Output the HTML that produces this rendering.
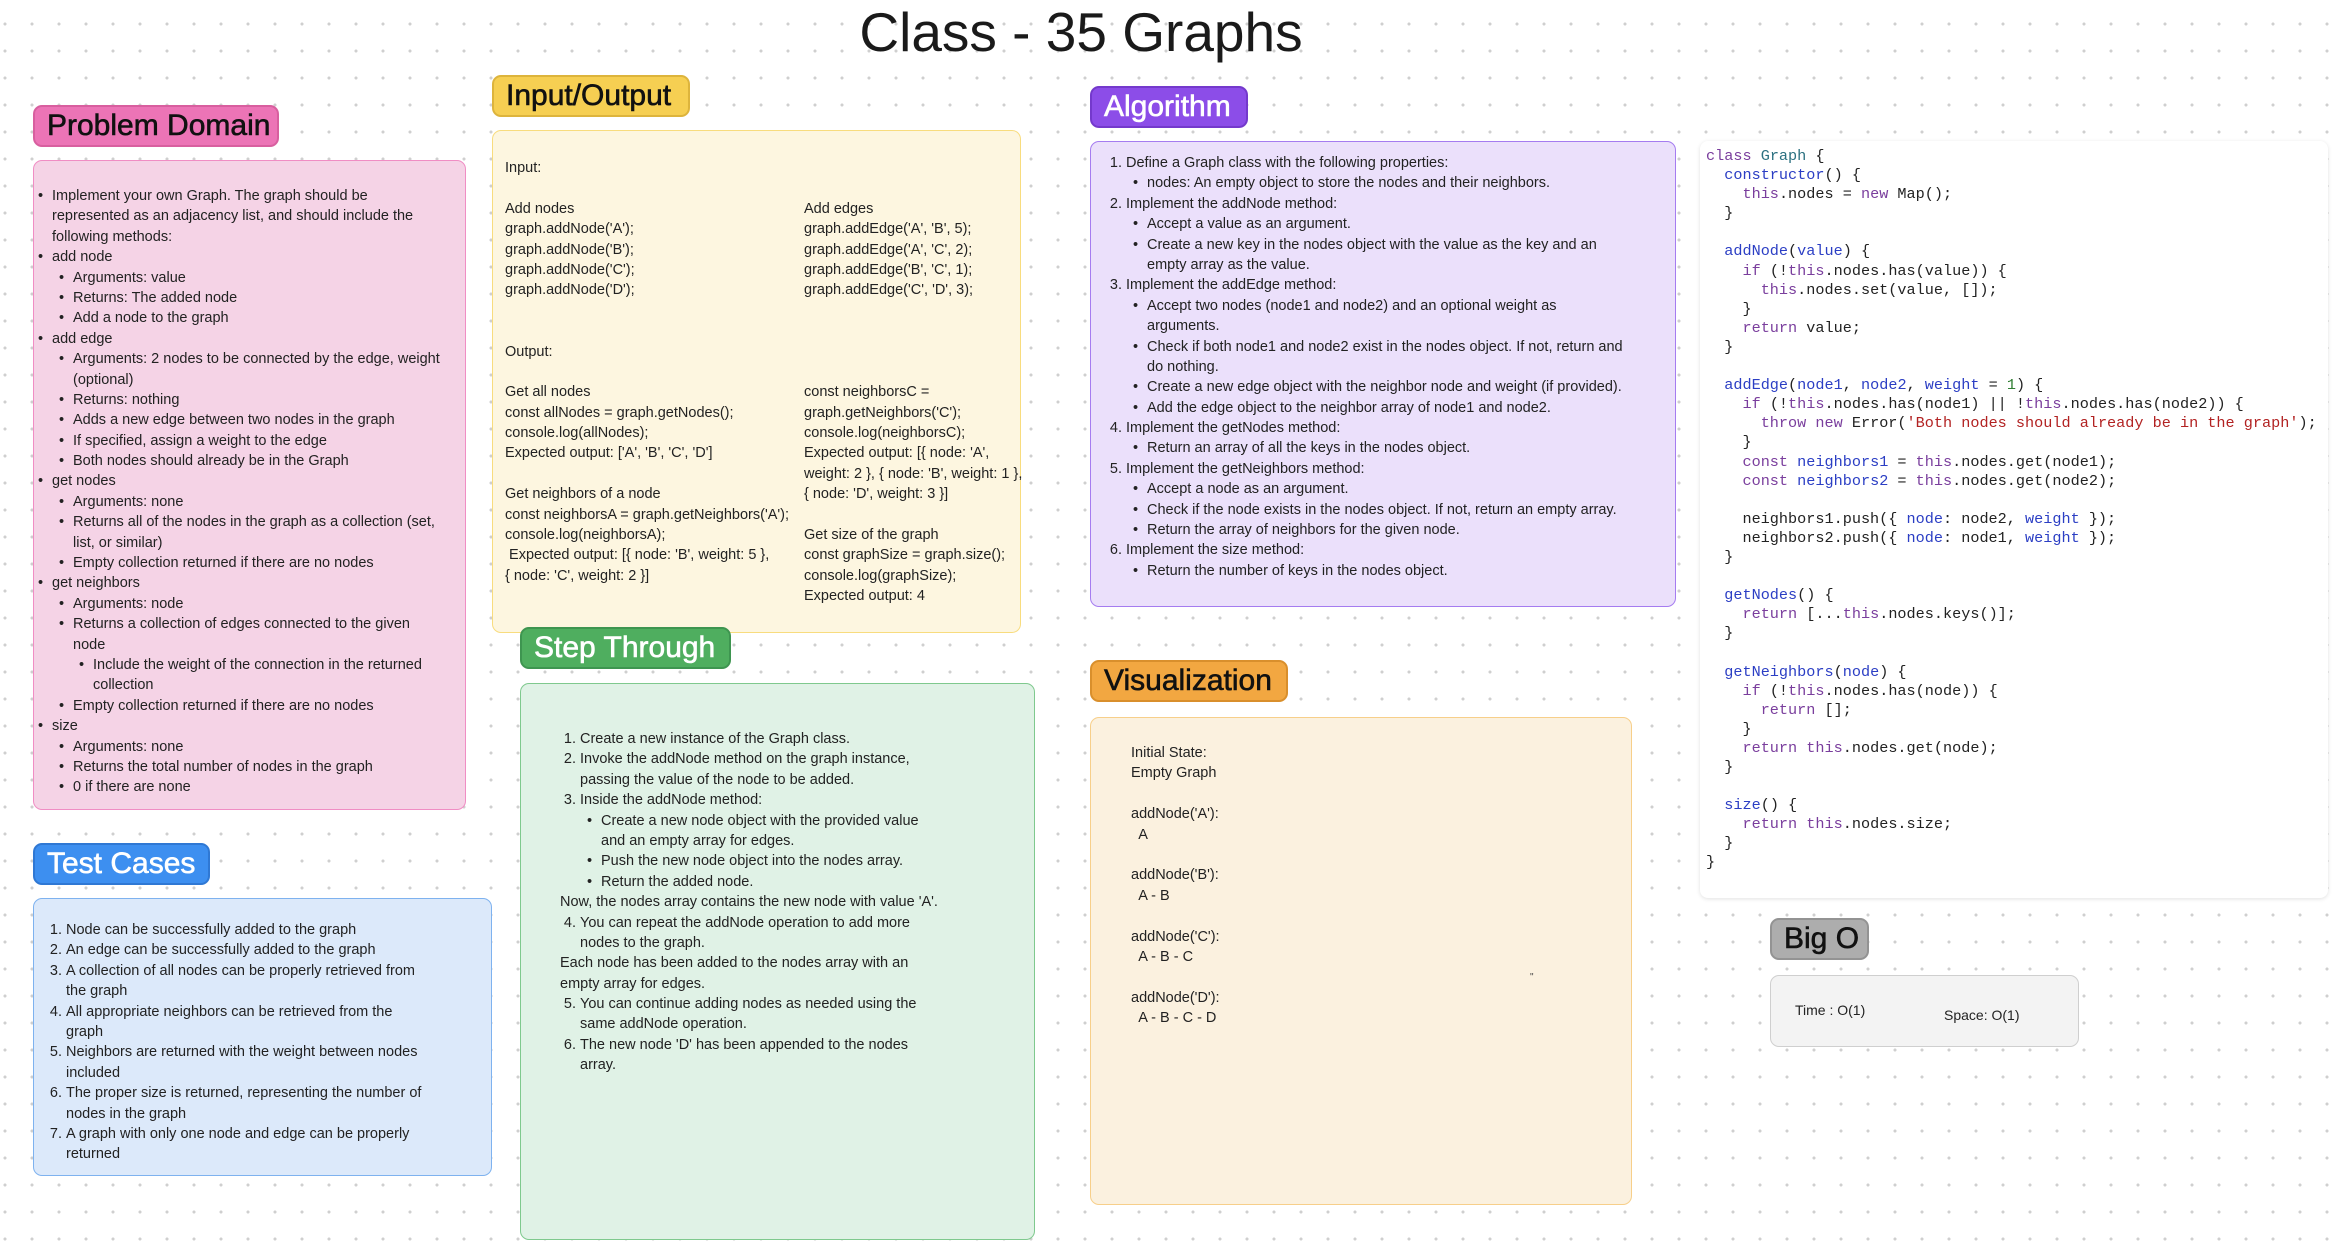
<!DOCTYPE html>
<html><head><meta charset="utf-8"><style>
*{margin:0;padding:0;box-sizing:border-box}
body{width:2346px;height:1250px;position:relative;overflow:hidden;background-color:#fff;
background-image:radial-gradient(circle,#cfcfcf 1.3px,transparent 1.8px);background-size:27px 27px;background-position:-8.5px 10.5px;
font-family:"Liberation Sans",sans-serif;color:#222}
.a{position:absolute}
.lbl{position:absolute;height:42px;border-radius:9px;border:2px solid;font-size:30px;line-height:38px;padding-left:12px;-webkit-text-stroke:0.6px currentColor;color:#111}
.box{position:absolute;border-radius:9px;border:1.5px solid}
.t{position:absolute;font-size:14.5px;line-height:20.4px}
.t div{position:relative;height:20.4px;white-space:pre}
.t .m{position:absolute;text-align:right}
.code{position:absolute;left:1706px;top:147px;font-family:"Liberation Mono",monospace;font-size:15.2px;line-height:19.1px;white-space:pre;color:#222}
.k{color:#7a3e9d}.f{color:#2b3ec4}.c{color:#2b7080}.s{color:#b22222}.n{color:#2e7d32}
</style></head><body>
<div class="a" style="left:781px;top:3px;width:600px;text-align:center;font-size:55px;line-height:58px;color:#1a1a1a">Class - 35 Graphs</div>

<!-- Problem Domain -->
<div class="lbl" style="left:33px;top:105px;width:246px;background:#ec74b6;border-color:#d85f9f">Problem Domain</div>
<div class="box" style="left:33px;top:160px;width:433px;height:650px;background:#f5d3e6;border-color:#f08dc4"></div>
<div class="t" style="left:0;top:186px">
<div style="left:52px"><span class="m" style="left:-14px">•</span>Implement your own Graph. The graph should be</div>
<div style="left:52px">represented as an adjacency list, and should include the</div>
<div style="left:52px">following methods:</div>
<div style="left:52px"><span class="m" style="left:-14px">•</span>add node</div>
<div style="left:73px"><span class="m" style="left:-14px">•</span>Arguments: value</div>
<div style="left:73px"><span class="m" style="left:-14px">•</span>Returns: The added node</div>
<div style="left:73px"><span class="m" style="left:-14px">•</span>Add a node to the graph</div>
<div style="left:52px"><span class="m" style="left:-14px">•</span>add edge</div>
<div style="left:73px"><span class="m" style="left:-14px">•</span>Arguments: 2 nodes to be connected by the edge, weight</div>
<div style="left:73px">(optional)</div>
<div style="left:73px"><span class="m" style="left:-14px">•</span>Returns: nothing</div>
<div style="left:73px"><span class="m" style="left:-14px">•</span>Adds a new edge between two nodes in the graph</div>
<div style="left:73px"><span class="m" style="left:-14px">•</span>If specified, assign a weight to the edge</div>
<div style="left:73px"><span class="m" style="left:-14px">•</span>Both nodes should already be in the Graph</div>
<div style="left:52px"><span class="m" style="left:-14px">•</span>get nodes</div>
<div style="left:73px"><span class="m" style="left:-14px">•</span>Arguments: none</div>
<div style="left:73px"><span class="m" style="left:-14px">•</span>Returns all of the nodes in the graph as a collection (set,</div>
<div style="left:73px">list, or similar)</div>
<div style="left:73px"><span class="m" style="left:-14px">•</span>Empty collection returned if there are no nodes</div>
<div style="left:52px"><span class="m" style="left:-14px">•</span>get neighbors</div>
<div style="left:73px"><span class="m" style="left:-14px">•</span>Arguments: node</div>
<div style="left:73px"><span class="m" style="left:-14px">•</span>Returns a collection of edges connected to the given</div>
<div style="left:73px">node</div>
<div style="left:93px"><span class="m" style="left:-14px">•</span>Include the weight of the connection in the returned</div>
<div style="left:93px">collection</div>
<div style="left:73px"><span class="m" style="left:-14px">•</span>Empty collection returned if there are no nodes</div>
<div style="left:52px"><span class="m" style="left:-14px">•</span>size</div>
<div style="left:73px"><span class="m" style="left:-14px">•</span>Arguments: none</div>
<div style="left:73px"><span class="m" style="left:-14px">•</span>Returns the total number of nodes in the graph</div>
<div style="left:73px"><span class="m" style="left:-14px">•</span>0 if there are none</div>
</div>

<!-- Test Cases -->
<div class="lbl" style="left:33px;top:843px;width:177px;background:#3d8ff0;border-color:#2f78d4;color:#fff">Test Cases</div>
<div class="box" style="left:33px;top:898px;width:459px;height:278px;background:#dce9fa;border-color:#7eb2ef"></div>
<div class="t" style="left:66px;top:920px">
<div><span class="m" style="left:-20px;width:16px">1.</span>Node can be successfully added to the graph</div>
<div><span class="m" style="left:-20px;width:16px">2.</span>An edge can be successfully added to the graph</div>
<div><span class="m" style="left:-20px;width:16px">3.</span>A collection of all nodes can be properly retrieved from</div>
<div>the graph</div>
<div><span class="m" style="left:-20px;width:16px">4.</span>All appropriate neighbors can be retrieved from the</div>
<div>graph</div>
<div><span class="m" style="left:-20px;width:16px">5.</span>Neighbors are returned with the weight between nodes</div>
<div>included</div>
<div><span class="m" style="left:-20px;width:16px">6.</span>The proper size is returned, representing the number of</div>
<div>nodes in the graph</div>
<div><span class="m" style="left:-20px;width:16px">7.</span>A graph with only one node and edge can be properly</div>
<div>returned</div>
</div>

<!-- Input/Output -->
<div class="lbl" style="left:492px;top:75px;width:198px;background:#f6cf52;border-color:#ddb43c">Input/Output</div>
<div class="box" style="left:492px;top:130px;width:529px;height:503px;background:#fdf6e0;border-color:#f8dc7e"></div>
<div class="t" style="left:505px;top:158px">
<div>Input:</div><div></div>
<div>Add nodes</div>
<div>graph.addNode('A');</div>
<div>graph.addNode('B');</div>
<div>graph.addNode('C');</div>
<div>graph.addNode('D');</div>
<div></div><div></div>
<div>Output:</div><div></div>
<div>Get all nodes</div>
<div>const allNodes = graph.getNodes();</div>
<div>console.log(allNodes);</div>
<div>Expected output: ['A', 'B', 'C', 'D']</div>
<div></div>
<div>Get neighbors of a node</div>
<div>const neighborsA = graph.getNeighbors('A');</div>
<div>console.log(neighborsA);</div>
<div> Expected output: [{ node: 'B', weight: 5 },</div>
<div>{ node: 'C', weight: 2 }]</div>
</div>
<div class="t" style="left:804px;top:158px">
<div></div><div></div>
<div>Add edges</div>
<div>graph.addEdge('A', 'B', 5);</div>
<div>graph.addEdge('A', 'C', 2);</div>
<div>graph.addEdge('B', 'C', 1);</div>
<div>graph.addEdge('C', 'D', 3);</div>
<div></div><div></div><div></div><div></div>
<div>const neighborsC =</div>
<div>graph.getNeighbors('C');</div>
<div>console.log(neighborsC);</div>
<div>Expected output: [{ node: 'A',</div>
<div>weight: 2 }, { node: 'B', weight: 1 },</div>
<div>{ node: 'D', weight: 3 }]</div>
<div></div>
<div>Get size of the graph</div>
<div>const graphSize = graph.size();</div>
<div>console.log(graphSize);</div>
<div>Expected output: 4</div>
</div>

<!-- Step Through -->
<div class="lbl" style="left:520px;top:627px;width:211px;background:#4fae5f;border-color:#3e9550;color:#fff">Step Through</div>
<div class="box" style="left:520px;top:683px;width:515px;height:557px;background:#e0f2e6;border-color:#7fc98e"></div>
<div class="t" style="left:580px;top:729px">
<div><span class="m" style="left:-20px;width:16px">1.</span>Create a new instance of the Graph class.</div>
<div><span class="m" style="left:-20px;width:16px">2.</span>Invoke the addNode method on the graph instance,</div>
<div>passing the value of the node to be added.</div>
<div><span class="m" style="left:-20px;width:16px">3.</span>Inside the addNode method:</div>
<div style="left:21px"><span class="m" style="left:-14px">•</span>Create a new node object with the provided value</div>
<div style="left:21px">and an empty array for edges.</div>
<div style="left:21px"><span class="m" style="left:-14px">•</span>Push the new node object into the nodes array.</div>
<div style="left:21px"><span class="m" style="left:-14px">•</span>Return the added node.</div>
<div style="left:-20px">Now, the nodes array contains the new node with value 'A'.</div>
<div><span class="m" style="left:-20px;width:16px">4.</span>You can repeat the addNode operation to add more</div>
<div>nodes to the graph.</div>
<div style="left:-20px">Each node has been added to the nodes array with an</div>
<div style="left:-20px">empty array for edges.</div>
<div><span class="m" style="left:-20px;width:16px">5.</span>You can continue adding nodes as needed using the</div>
<div>same addNode operation.</div>
<div><span class="m" style="left:-20px;width:16px">6.</span>The new node 'D' has been appended to the nodes</div>
<div>array.</div>
</div>

<!-- Algorithm -->
<div class="lbl" style="left:1090px;top:86px;width:158px;background:#8c4de8;border-color:#7439cc;color:#fff">Algorithm</div>
<div class="box" style="left:1090px;top:141px;width:586px;height:466px;background:#ebe0fb;border-color:#a57cf0"></div>
<div class="t" style="left:1126px;top:153px">
<div><span class="m" style="left:-20px;width:16px">1.</span>Define a Graph class with the following properties:</div>
<div style="left:21px"><span class="m" style="left:-14px">•</span>nodes: An empty object to store the nodes and their neighbors.</div>
<div><span class="m" style="left:-20px;width:16px">2.</span>Implement the addNode method:</div>
<div style="left:21px"><span class="m" style="left:-14px">•</span>Accept a value as an argument.</div>
<div style="left:21px"><span class="m" style="left:-14px">•</span>Create a new key in the nodes object with the value as the key and an</div>
<div style="left:21px">empty array as the value.</div>
<div><span class="m" style="left:-20px;width:16px">3.</span>Implement the addEdge method:</div>
<div style="left:21px"><span class="m" style="left:-14px">•</span>Accept two nodes (node1 and node2) and an optional weight as</div>
<div style="left:21px">arguments.</div>
<div style="left:21px"><span class="m" style="left:-14px">•</span>Check if both node1 and node2 exist in the nodes object. If not, return and</div>
<div style="left:21px">do nothing.</div>
<div style="left:21px"><span class="m" style="left:-14px">•</span>Create a new edge object with the neighbor node and weight (if provided).</div>
<div style="left:21px"><span class="m" style="left:-14px">•</span>Add the edge object to the neighbor array of node1 and node2.</div>
<div><span class="m" style="left:-20px;width:16px">4.</span>Implement the getNodes method:</div>
<div style="left:21px"><span class="m" style="left:-14px">•</span>Return an array of all the keys in the nodes object.</div>
<div><span class="m" style="left:-20px;width:16px">5.</span>Implement the getNeighbors method:</div>
<div style="left:21px"><span class="m" style="left:-14px">•</span>Accept a node as an argument.</div>
<div style="left:21px"><span class="m" style="left:-14px">•</span>Check if the node exists in the nodes object. If not, return an empty array.</div>
<div style="left:21px"><span class="m" style="left:-14px">•</span>Return the array of neighbors for the given node.</div>
<div><span class="m" style="left:-20px;width:16px">6.</span>Implement the size method:</div>
<div style="left:21px"><span class="m" style="left:-14px">•</span>Return the number of keys in the nodes object.</div>
</div>

<!-- Visualization -->
<div class="lbl" style="left:1090px;top:660px;width:198px;background:#f2a741;border-color:#d98f2c">Visualization</div>
<div class="box" style="left:1090px;top:717px;width:542px;height:488px;background:#fbf1df;border-color:#f7cf8a"></div>
<div class="t" style="left:1131px;top:743px">
<div>Initial State:</div>
<div>Empty Graph</div>
<div></div>
<div>addNode('A'):</div>
<div>  A</div>
<div></div>
<div>addNode('B'):</div>
<div>  A - B</div>
<div></div>
<div>addNode('C'):</div>
<div>  A - B - C</div>
<div></div>
<div>addNode('D'):</div>
<div>  A - B - C - D</div>
</div>
<div class="a" style="left:1530px;top:972px;font-size:10px;color:#444">"</div>

<!-- Code -->
<div class="a" style="left:1700px;top:141px;width:628px;height:757px;background:#fff;border-radius:8px;box-shadow:0 1px 4px rgba(0,0,0,0.12)"></div>
<div class="code"><span class="k">class</span> <span class="c">Graph</span> {
  <span class="f">constructor</span>() {
    <span class="k">this</span>.nodes = <span class="k">new</span> Map();
  }

  <span class="f">addNode</span>(<span class="f">value</span>) {
    <span class="k">if</span> (!<span class="k">this</span>.nodes.has(value)) {
      <span class="k">this</span>.nodes.set(value, []);
    }
    <span class="k">return</span> value;
  }

  <span class="f">addEdge</span>(<span class="f">node1</span>, <span class="f">node2</span>, <span class="f">weight</span> = <span class="n">1</span>) {
    <span class="k">if</span> (!<span class="k">this</span>.nodes.has(node1) || !<span class="k">this</span>.nodes.has(node2)) {
      <span class="k">throw</span> <span class="k">new</span> Error(<span class="s">'Both nodes should already be in the graph'</span>);
    }
    <span class="k">const</span> <span class="f">neighbors1</span> = <span class="k">this</span>.nodes.get(node1);
    <span class="k">const</span> <span class="f">neighbors2</span> = <span class="k">this</span>.nodes.get(node2);

    neighbors1.push({ <span class="f">node</span>: node2, <span class="f">weight</span> });
    neighbors2.push({ <span class="f">node</span>: node1, <span class="f">weight</span> });
  }

  <span class="f">getNodes</span>() {
    <span class="k">return</span> [...<span class="k">this</span>.nodes.keys()];
  }

  <span class="f">getNeighbors</span>(<span class="f">node</span>) {
    <span class="k">if</span> (!<span class="k">this</span>.nodes.has(node)) {
      <span class="k">return</span> [];
    }
    <span class="k">return</span> <span class="k">this</span>.nodes.get(node);
  }

  <span class="f">size</span>() {
    <span class="k">return</span> <span class="k">this</span>.nodes.size;
  }
}</div>

<!-- Big O -->
<div class="lbl" style="left:1770px;top:918px;width:99px;background:#adadad;border-color:#939393">Big O</div>
<div class="box" style="left:1770px;top:975px;width:309px;height:72px;background:#f3f3f3;border-color:#cfcfcf"></div>
<div class="a" style="left:1795px;top:1002px;font-size:14px">Time : O(1)</div>
<div class="a" style="left:1944px;top:1007px;font-size:14px">Space: O(1)</div>
</body></html>
